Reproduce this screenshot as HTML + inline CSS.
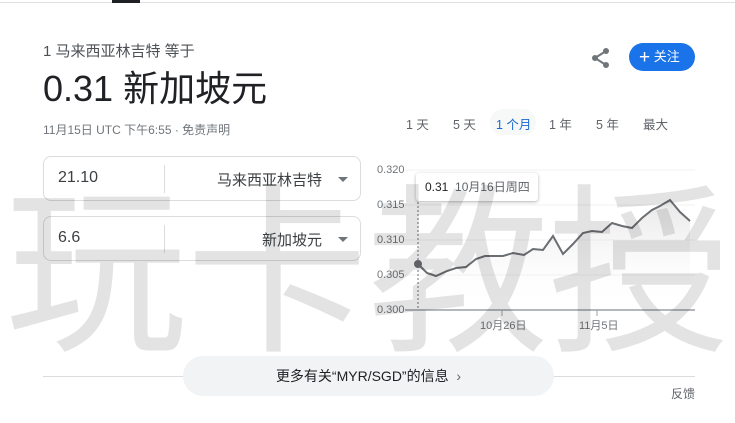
<!DOCTYPE html>
<html><head><meta charset="utf-8"><style>
*{margin:0;padding:0;box-sizing:border-box}
body{width:735px;height:423px;background:#fff;position:relative;overflow:hidden;font-family:"Liberation Sans","Noto Sans CJK SC",sans-serif;color:#202124}
.a{position:absolute}
.box{position:absolute;left:43px;width:318px;height:45px;border:1px solid #dadce0;border-radius:8px}
.box .v{position:absolute;left:14px;top:12px;font-size:16px;color:#3c4043}
.box .d{position:absolute;left:120px;top:8px;width:1px;height:28px;background:#dadce0}
.box .c{position:absolute;right:38px;top:12px;font-size:15px;color:#3c4043}
.box .t{position:absolute;right:12px;top:20px;width:0;height:0;border-left:5px solid transparent;border-right:5px solid transparent;border-top:5px solid #70757a}
.rng span{position:absolute;top:114px;font-size:12.5px;color:#5f6368}
.yl{position:absolute;left:377px;font-size:11px;color:#70757a}
</style></head><body>
<div class="a" style="left:0;top:2px;width:735px;height:1px;background:#e0e0e0"></div>
<div class="a" style="left:112px;top:0;width:28px;height:3px;background:#202124"></div>
<div class="a" style="left:43px;top:40px;font-size:15px;color:#4d5156">1 马来西亚林吉特 等于</div>
<div class="a" style="left:43px;top:66px;font-size:36px;line-height:46px;color:#202124">0.31 新加坡元</div>
<div class="a" style="left:43px;top:121px;font-size:12px;color:#70757a">11月15日 UTC 下午6:55 · 免责声明</div>
<svg class="a" style="left:591px;top:47px" width="20" height="22" viewBox="0 0 20 22"><circle cx="15" cy="4" r="3" fill="#70757a"/><circle cx="4" cy="11" r="3" fill="#70757a"/><circle cx="15" cy="18" r="3" fill="#70757a"/><path d="M15 4L4 11L15 18" stroke="#70757a" stroke-width="2" fill="none"/></svg>
<div class="a" style="left:629px;top:43px;width:66px;height:28px;border-radius:14px;background:#1a73e8;color:#fff;font-size:13px;line-height:28px;padding-left:10px"><span style="font-size:19px;vertical-align:-2px">+</span>&nbsp;关注</div>
<div class="rng">
<span style="left:406px">1 天</span><span style="left:453px">5 天</span>
<span style="left:490px;top:109px;width:46px;height:26px;border-radius:13px;background:#f1f3f4;opacity:.6"></span>
<span style="left:496px;color:#1967d2">1 个月</span><span style="left:549px">1 年</span><span style="left:596px">5 年</span><span style="left:643px">最大</span>
</div>
<div class="box" style="top:156px"><div class="v">21.10</div><div class="d"></div><div class="c">马来西亚林吉特</div><div class="t"></div></div>
<div class="box" style="top:216px"><div class="v">6.6</div><div class="d"></div><div class="c">新加坡元</div><div class="t"></div></div>
<div class="yl" style="top:164px">0.320</div><div class="yl" style="top:199px">0.315</div><div class="yl" style="top:234px">0.310</div><div class="yl" style="top:269px">0.305</div><div class="yl" style="top:304px">0.300</div>
<svg class="a" style="left:0;top:0" width="735" height="423">
<defs><linearGradient id="g" x1="0" y1="0" x2="0" y2="1"><stop offset="0" stop-color="#bbb" stop-opacity=".35"/><stop offset="1" stop-color="#fff" stop-opacity="0"/></linearGradient></defs>
<g stroke="#f1f1f1" stroke-width="1"><line x1="405" y1="170" x2="695" y2="170"/><line x1="405" y1="205" x2="695" y2="205"/><line x1="405" y1="240" x2="695" y2="240"/><line x1="405" y1="275" x2="695" y2="275"/></g>
<path d="M418,264 L427,273 436,276 447,271 456,268 466,267 476,259 485,256 503,256 513,253 524,255 533,249 543,250 553,236 563,254 573,244 583,233 592,231 602,232 612,223 622,226 632,228 642,218 652,210 660,206 670,200 680,212 690,221 L690,310 L418,310Z" fill="url(#g)"/>
<line x1="405" y1="310" x2="695" y2="310" stroke="#9aa0a6" stroke-width="1.5"/>
<line x1="502" y1="310" x2="502" y2="316" stroke="#9aa0a6"/><line x1="597" y1="310" x2="597" y2="316" stroke="#9aa0a6"/>
<line x1="418" y1="190" x2="418" y2="310" stroke="#70757a" stroke-dasharray="2,2"/>
<path d="M418,264 L427,273 436,276 447,271 456,268 466,267 476,259 485,256 503,256 513,253 524,255 533,249 543,250 553,236 563,254 573,244 583,233 592,231 602,232 612,223 622,226 632,228 642,218 652,210 660,206 670,200 680,212 690,221" fill="none" stroke="#6b6e72" stroke-width="2"/>
<circle cx="418" cy="264" r="4" fill="#6b6e72"/>
</svg>
<div class="a" style="left:416px;top:173px;width:122px;height:28px;background:#fff;border-radius:3px;box-shadow:0 1px 3px rgba(0,0,0,.3);font-size:12px;line-height:28px;padding-left:9px;color:#5f6368"><span style="color:#202124">0.31</span>&nbsp; 10月16日周四</div>
<div class="a" style="left:480px;top:317px;font-size:11px;color:#70757a">10月26日</div>
<div class="a" style="left:579px;top:317px;font-size:11px;color:#70757a">11月5日</div>
<div class="a" style="left:43px;top:376px;width:652px;height:1px;background:#dadce0"></div>
<div class="a" style="left:183px;top:356px;width:371px;height:40px;border-radius:20px;background:#f1f3f4;text-align:center;font-size:14px;line-height:40px;color:#202124">更多有关“MYR/SGD”的信息 &nbsp;<span style="color:#5f6368">›</span></div>
<div class="a" style="left:671px;top:385px;font-size:12px;color:#5f6368">反馈</div>
<div class="a" style="left:5px;top:168px;font-size:182px;line-height:1;color:rgba(0,0,0,.11);font-family:'Noto Sans CJK SC',sans-serif;white-space:nowrap;letter-spacing:-1px">玩卡教授</div>
</body></html>
